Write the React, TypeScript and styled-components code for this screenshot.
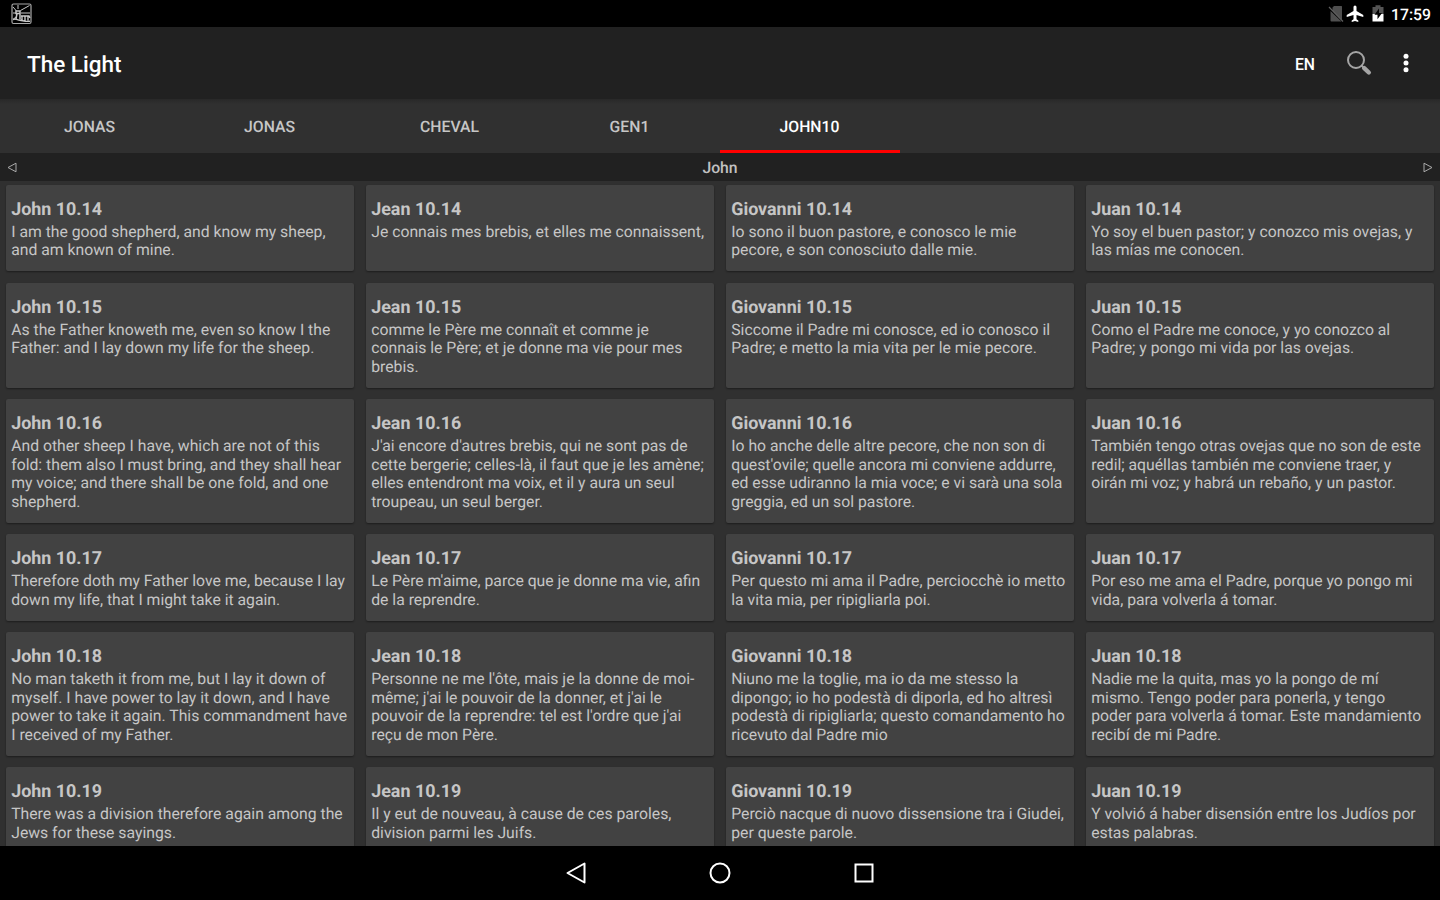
import React from 'react';
import styled, { createGlobalStyle } from 'styled-components';

const GlobalStyle = createGlobalStyle`
  * { box-sizing: border-box; }
  html, body { margin: 0; padding: 0; background: #303030; overflow: hidden; }
  body { font-family: Roboto, "Liberation Sans", sans-serif; text-rendering: geometricPrecision; }
`;

const Screen = styled.div`
  width: 1440px;
  height: 900px;
  display: flex;
  flex-direction: column;
  overflow: hidden;
  background: #303030;
`;

const StatusBar = styled.header`
  height: 27px;
  flex: none;
  display: flex;
  align-items: center;
  justify-content: space-between;
  padding: 0 9px 0 11px;
  background: #000;
`;

const StatusIcons = styled.div`
  display: flex;
  align-items: center;
`;

const StatusIcon = styled.svg<{ $gap: number }>`
  display: block;
  margin-right: ${p => p.$gap}px;
`;

const Clock = styled.span`
  font-size: 15.75px;
  line-height: 27px;
  font-weight: 500;
  color: #fff;
  padding-top: 1px;
`;

const Toolbar = styled.div`
  height: 72px;
  flex: none;
  display: flex;
  align-items: center;
  padding: 0 31px 0 27px;
  background: #212121;
`;

const Title = styled.h1`
  margin: 0;
  padding-top: 3px;
  flex: 1;
  font-size: 22.5px;
  font-weight: 500;
  line-height: 28px;
  color: #fff;
`;

const Language = styled.button`
  border: 0;
  padding: 2px 0 0;
  margin-right: 31px;
  background: none;
  font: 500 15.75px Roboto, sans-serif;
  color: #fff;
`;

const Tabs = styled.nav`
  height: 54px;
  flex: none;
  display: flex;
  background: linear-gradient(#282828 0, #303030 5px);
`;

const Tab = styled.div<{ $active?: boolean }>`
  width: 180px;
  display: flex;
  align-items: center;
  justify-content: center;
  padding: 4px 1px 0 0;
  border-bottom: 3px solid ${p => (p.$active ? '#f00' : 'transparent')};
  font-size: 15.75px;
  font-weight: 500;
  color: ${p => (p.$active ? '#fff' : '#c6c6c6')};
`;

const BookBar = styled.div`
  height: 28px;
  flex: none;
  display: flex;
  align-items: center;
  justify-content: space-between;
  padding: 1px 7px 0;
  background: #212121;
  color: #c1c1c1;
  font-size: 15.75px;
  font-weight: 500;
`;

const Verses = styled.main`
  flex: 1;
  min-height: 0;
  overflow: hidden;
  display: flex;
  flex-direction: column;
  gap: 11.4px;
  padding: 3.6px 5.6px 0;
`;

const VerseRow = styled.div`
  flex: none;
  display: grid;
  grid-template-columns: repeat(4, 1fr);
  gap: 11.25px;
`;

const Card = styled.article`
  padding: 12px 5.6px 11.4px;
  border-radius: 2px;
  background: #424242;
  box-shadow: 0 1px 2px rgba(0, 0, 0, 0.4);
  color: #c6c6c6;
`;

const Reference = styled.h2`
  margin: 0;
  height: 26px;
  font-size: 17.9px;
  line-height: 26px;
  font-weight: 700;
`;

const VerseText = styled.p`
  margin: 0;
  font-size: 15.75px;
  line-height: 18.6px;
  white-space: pre;
`;

const NavBar = styled.footer`
  height: 54px;
  flex: none;
  display: flex;
  align-items: center;
  justify-content: center;
  gap: 120px;
  background: #000;
`;

const NavIcon = styled.svg`
  width: 24px;
  height: 24px;
  fill: none;
  stroke: #fff;
  stroke-width: 2;
`;

const OverflowIcon = styled.svg`
  margin-left: 30px;
  fill: #fff;
`;

const tabs = ['JONAS', 'JONAS', 'CHEVAL', 'GEN1', 'JOHN10'];
const books = ['John', 'Jean', 'Giovanni', 'Juan'];

const verses: { number: string; texts: string[] }[] = [
  {
    number: '10.14',
    texts: [
      'I am the good shepherd, and know my sheep,\nand am known of mine.',
      'Je connais mes brebis, et elles me connaissent,',
      'Io sono il buon pastore, e conosco le mie\npecore, e son conosciuto dalle mie.',
      'Yo soy el buen pastor; y conozco mis ovejas, y\nlas mías me conocen.',
    ],
  },
  {
    number: '10.15',
    texts: [
      'As the Father knoweth me, even so know I the\nFather: and I lay down my life for the sheep.',
      'comme le Père me connaît et comme je\nconnais le Père; et je donne ma vie pour mes\nbrebis.',
      'Siccome il Padre mi conosce, ed io conosco il\nPadre; e metto la mia vita per le mie pecore.',
      'Como el Padre me conoce, y yo conozco al\nPadre; y pongo mi vida por las ovejas.',
    ],
  },
  {
    number: '10.16',
    texts: [
      'And other sheep I have, which are not of this\nfold: them also I must bring, and they shall hear\nmy voice; and there shall be one fold, and one\nshepherd.',
      "J'ai encore d'autres brebis, qui ne sont pas de\ncette bergerie; celles-là, il faut que je les amène;\nelles entendront ma voix, et il y aura un seul\ntroupeau, un seul berger.",
      "Io ho anche delle altre pecore, che non son di\nquest'ovile; quelle ancora mi conviene addurre,\ned esse udiranno la mia voce; e vi sarà una sola\ngreggia, ed un sol pastore.",
      'También tengo otras ovejas que no son de este\nredil; aquéllas también me conviene traer, y\noirán mi voz; y habrá un rebaño, y un pastor.',
    ],
  },
  {
    number: '10.17',
    texts: [
      'Therefore doth my Father love me, because I lay\ndown my life, that I might take it again.',
      "Le Père m'aime, parce que je donne ma vie, afin\nde la reprendre.",
      'Per questo mi ama il Padre, perciocchè io metto\nla vita mia, per ripigliarla poi.',
      'Por eso me ama el Padre, porque yo pongo mi\nvida, para volverla á tomar.',
    ],
  },
  {
    number: '10.18',
    texts: [
      'No man taketh it from me, but I lay it down of\nmyself. I have power to lay it down, and I have\npower to take it again. This commandment have\nI received of my Father.',
      "Personne ne me l'ôte, mais je la donne de moi-\nmême; j'ai le pouvoir de la donner, et j'ai le\npouvoir de la reprendre: tel est l'ordre que j'ai\nreçu de mon Père.",
      'Niuno me la toglie, ma io da me stesso la\ndipongo; io ho podestà di diporla, ed ho altresì\npodestà di ripigliarla; questo comandamento ho\nricevuto dal Padre mio',
      'Nadie me la quita, mas yo la pongo de mí\nmismo. Tengo poder para ponerla, y tengo\npoder para volverla á tomar. Este mandamiento\nrecibí de mi Padre.',
    ],
  },
  {
    number: '10.19',
    texts: [
      'There was a division therefore again among the\nJews for these sayings.',
      'Il y eut de nouveau, à cause de ces paroles,\ndivision parmi les Juifs.',
      'Perciò nacque di nuovo dissensione tra i Giudei,\nper queste parole.',
      'Y volvió á haber disensión entre los Judíos por\nestas palabras.',
    ],
  },
];

const LighthouseIcon = () => (
  <svg width="21" height="22" viewBox="0 0 21 22" fill="none" stroke="#c8c8c8">
    <rect x="1" y="1" width="19" height="19.500" rx="1.500" stroke="#a8a8a8" strokeWidth="1.200" />
    <path d="M2 4l3.500 4M9.500 7.500l9-5M10 10h9M2 10h3M7 2v4M2 16.500l4-3.500" strokeWidth="1" />
    <path d="M5 8h4v2.500H5zM6 10.500l-1 5.500M9 10.500v6" strokeWidth="1.500" />
    <path d="M2 16.500c3-1.500 4 .5 7 .8s5 1.500 10 1M10 13h8l1 2M11 13.500v4M14 13.500v4.500M17 13.500v4" strokeWidth="1.400" />
  </svg>
);

const NoSimIcon = () => (
  <StatusIcon $gap={2} width="16" height="18" viewBox="0 0 16 18">
    <path d="M6 1h7.500Q14 1 14 2v13L4.500 5.500V2.500zM2.500 6l11 10.500H3.500Q2.500 16.500 2.500 15.500z" fill="#4f4f4f" />
    <path d="M1 2l14 14.500" stroke="#606060" strokeWidth="1.200" />
  </StatusIcon>
);

const AirplaneIcon = () => (
  <StatusIcon $gap={8} width="18" height="18" viewBox="0 0 18 18">
    <path d="M17.300 12v-1.900l-6.800-4.200V2a1.500 1.500 0 0 0-3 0v3.900L.700 10.100V12l6.800-2.100v4.300L5.700 15.600v1.500l3.300-1 3.300 1v-1.500l-1.800-1.400V9.900z" fill="#fff" />
  </StatusIcon>
);

const BatteryIcon = () => (
  <StatusIcon $gap={7} width="12" height="17" viewBox="0 0 12 17">
    <path d="M0.500 2h3V0.300h5V2h3v7h-11z" fill="#545454" />
    <path d="M0.500 9h11v7.500H0.500z" fill="#fff" />
    <path d="M7 3.500L2.500 9.700h3v4.500L10 8H7z" fill="#000" />
  </StatusIcon>
);

const SearchIcon = () => (
  <svg width="27" height="27" viewBox="0 0 27 27" fill="none">
    <circle cx="10" cy="10" r="8" stroke="#a5a5a5" strokeWidth="2" />
    <path d="M15.500 15.500l3 3" stroke="#a5a5a5" strokeWidth="2" />
    <path d="M18.200 18.200l4.600 4.300" stroke="#a5a5a5" strokeWidth="4.400" strokeLinecap="round" />
  </svg>
);

const MoreIcon = () => (
  <OverflowIcon width="6" height="20" viewBox="0 0 6 20">
    <circle cx="3" cy="3.300" r="2.500" />
    <circle cx="3" cy="10" r="2.500" />
    <circle cx="3" cy="16.700" r="2.500" />
  </OverflowIcon>
);

const PageArrow = ({ forward = false }: { forward?: boolean }) => (
  <svg width="10" height="11" viewBox="0 0 10 11" fill="none" stroke="#aaa" strokeWidth="1">
    <path d={forward ? 'M1 1.200v8.600l8-4.300z' : 'M9 1.200v8.600L1 5.500z'} />
  </svg>
);

export default function App() {
  return (
    <Screen>
      <GlobalStyle />
      <StatusBar>
        <LighthouseIcon />
        <StatusIcons>
          <NoSimIcon />
          <AirplaneIcon />
          <BatteryIcon />
          <Clock>17:59</Clock>
        </StatusIcons>
      </StatusBar>
      <Toolbar>
        <Title>The Light</Title>
        <Language>EN</Language>
        <SearchIcon />
        <MoreIcon />
      </Toolbar>
      <Tabs>
        {tabs.map((label, i) => (
          <Tab key={i} $active={i === 4}>{label}</Tab>
        ))}
      </Tabs>
      <BookBar>
        <PageArrow />
        <span>John</span>
        <PageArrow forward />
      </BookBar>
      <Verses>
        {verses.map(verse => (
          <VerseRow key={verse.number}>
            {verse.texts.map((text, i) => (
              <Card key={books[i]}>
                <Reference>{books[i]} {verse.number}</Reference>
                <VerseText>{text}</VerseText>
              </Card>
            ))}
          </VerseRow>
        ))}
      </Verses>
      <NavBar>
        <NavIcon viewBox="0 0 24 24">
          <path d="M20.500 2.500v19L3.500 12z" strokeLinejoin="round" />
        </NavIcon>
        <NavIcon viewBox="0 0 24 24">
          <circle cx="12" cy="12" r="9.500" />
        </NavIcon>
        <NavIcon viewBox="0 0 24 24">
          <rect x="3.500" y="3.500" width="17" height="17" />
        </NavIcon>
      </NavBar>
    </Screen>
  );
}
